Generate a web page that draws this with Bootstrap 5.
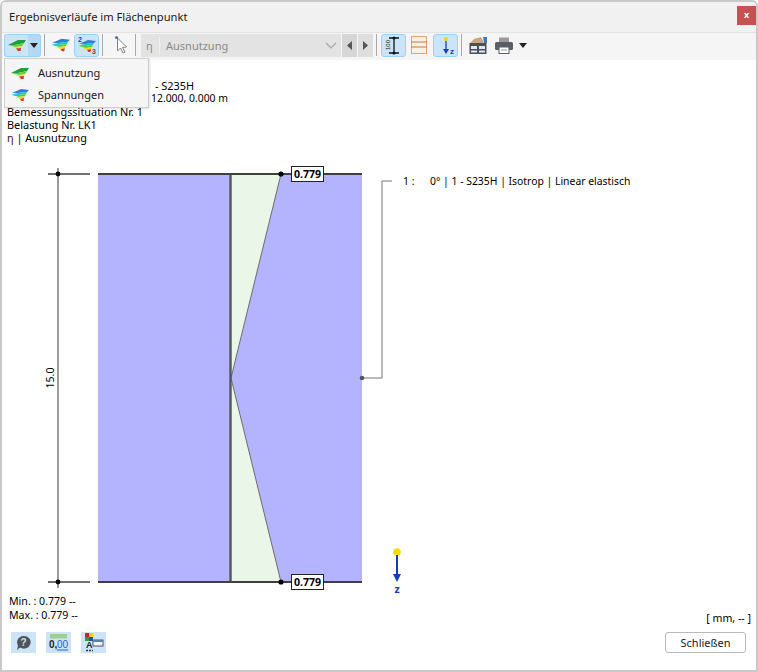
<!DOCTYPE html>
<html lang="de">
<head>
<meta charset="UTF-8">
<title>Ergebnisverläufe im Flächenpunkt</title>
<link rel="stylesheet" href="https://cdn.jsdelivr.net/npm/bootstrap@5.3.2/dist/css/bootstrap.min.css">
<style>
html, body { margin: 0; height: 100%; background: #fff; }
body { font-family: "Noto Sans", "Liberation Sans", sans-serif; font-size: 10.6px; color: #000; line-height: 13px; }
.dialog { width: 758px; height: 672px; border: 2px solid #c9c9c9; border-radius: 6px 6px 0 0; overflow: hidden; background: #fff; }
.titlebar { height: 31px; background: #f1f1f1; padding: 0 0 0 7px; font-size: 11.15px; color: #1a1a1a; border-bottom: 1px solid #e3e3e3; }
.btn-close-red { width: 19px; height: 19px; margin-left: auto; background: #c75050; color: #fff; font-weight: 700; font-size: 9px; line-height: 18px; text-align: center; margin-top: -2px; }
.toolbar { height: 27px; background: #f5f5f5; padding: 0 0 2px 2px; }
.tb { width: 25px; height: 23px; border: 1px solid transparent; border-radius: 3px; }
.tb.on { background: #cce4f7; border-color: #99d1ff; }
.tb.left { width: 24px; border-radius: 3px 0 0 3px; border-right: 0; }
.tb.right { width: 13px; background: #b5d9f5; border-radius: 0 3px 3px 0; border-left: 0; }
.sep { width: 1px; height: 22px; background: #a8a8a8; }
.ms-tb3 { margin-left: 3px; }
.ms-tb5 { margin-left: 5px; }
.ms-tb6 { margin-left: 6px; }
.ms-tb7 { margin-left: 7px; }
.ms-tb11 { margin-left: 11px; }
.combo { width: 200px; height: 23px; background: #e3e3e3; color: #8a8a8a; font-size: 11px; padding-left: 5px; margin-left: 5px; }
.combo .eta { width: 14px; border-right: 1px solid #f0f0f0; margin-right: 6px; height: 17px; line-height: 17px; }
.nav-sq { width: 15px; height: 23px; background: #d6d6d6; margin-left: 1px; }
.nav-sq.light { background: #dedede; }
.canvas { height: 568px; }
.canvas > svg { position: absolute; top: 0; left: 0; }
.canvas text { font-family: "Noto Sans", "Liberation Sans", sans-serif; font-size: 10.6px; fill: #000; }
.canvas text.legend { font-size: 10.4px; }
.canvas text.fw-bold { font-weight: 700; }
.canvas text.axis-z { font-weight: 700; fill: #0f3fc0; }
.info { padding: 19px 0 0 5px; white-space: nowrap; position: relative; font-size: 10.9px; }
.info .past-s { padding-left: 148px; }
.info .past-p { padding-left: 144px; font-size: 10.4px; }
.eta-label { color: #4a1030; }
.menu { position: absolute; top: -2px; left: 2px; width: 145px; height: 50px; background: #f5f5f5; border: 1px solid #cfcfcf; border-radius: 0; padding: 3px 0; min-width: 0; box-shadow: 1px 1px 2px rgba(0,0,0,.12); }
.menu .dropdown-item { padding: 0 0 0 6px; height: 22px; gap: 9px; font-size: 11px; color: #1a1a1a; }
.bottom { position: absolute; left: 7px; right: 5px; top: 534px; line-height: 14px; }
.unit { margin-bottom: -3px; }
.foot { height: 43px; padding: 5px 10px 0 9px; }
.ficon { width: 25px; height: 21px; background: #cce4f7; margin-right: 10px; }
.btn-schl { width: 81px; height: 21px; padding: 0; font-size: 11px; line-height: 19px; background: #fff; border: 1px solid #b9b9b9; border-radius: 3px; color: #1a1a1a; }
</style>
</head>
<body>
<svg width="0" height="0" class="d-block">
  <defs>
    <symbol id="surf" viewBox="0 0 18 12">
      <polygon points="0,6 10,1 18,1 16,4 7,6" fill="#1f9e3c"/>
      <polygon points="0,6 7,6 16,4 14,7 8,8" fill="#5fd038"/>
      <polygon points="3,7.5 8,8 14,7 13,9 8,9.5" fill="#f2e51e"/>
      <polygon points="8,9.5 13,9 12.5,12 10,12" fill="#e03020"/>
    </symbol>
    <symbol id="surf2" viewBox="0 0 18 12">
      <polygon points="1,4 10,0 18,1 16,3 7,4" fill="#2a7fd8"/>
      <polygon points="0,6 7,4 16,3 15,5 7,6" fill="#23c4c8"/>
      <polygon points="1,6 7,6 15,5 14,7 8,8" fill="#4fd040"/>
      <polygon points="5,8 8,8 14,7 13,9 9,10" fill="#f2d81e"/>
      <polygon points="9,10 13,9 12.5,12 10.5,12" fill="#e03020"/>
    </symbol>
  </defs>
</svg>
<div class="dialog d-flex flex-column">
  <div class="titlebar d-flex align-items-center">
    <span>Ergebnisverläufe im Flächenpunkt</span>
    <div class="btn-close-red">x</div>
  </div>
  <div class="toolbar d-flex align-items-center">
    <div class="tb on left d-flex align-items-center justify-content-center"><svg width="18" height="12"><use href="#surf"/></svg></div>
    <div class="tb on right d-flex align-items-center justify-content-center"><svg width="8" height="5"><polygon points="0,0 8,0 4,5" fill="#222"/></svg></div>
    <div class="sep ms-tb3"></div>
    <div class="d-flex ms-tb6"><svg width="19" height="14"><use href="#surf2"/></svg></div>
    <div class="tb on d-flex align-items-center justify-content-center ms-1">
      <svg width="21" height="20" viewBox="0 0 21 20"><use href="#surf2" x="2" y="5" width="18" height="12"/><text x="2" y="7" font-size="7" font-weight="700" fill="#1c3fb0" font-family="Liberation Sans">2</text><text x="16" y="19" font-size="7" font-weight="700" fill="#c02030" font-family="Liberation Sans">3</text></svg>
    </div>
    <div class="sep ms-tb3"></div>
    <div class="d-flex ms-tb11"><svg width="14" height="20" viewBox="0 0 14 20"><path d="M3.5 3 L3.5 16 L6.5 13 L9 18 L11 17 L8.5 12.5 L12.5 12 Z" fill="#fff" stroke="#808080"/><circle cx="2.5" cy="2.5" r="1.6" fill="#5a7a9a"/></svg></div>
    <div class="sep ms-tb7"></div>
    <div class="combo d-flex align-items-center">
      <span class="eta">η</span><span>Ausnutzung</span>
      <svg class="ms-auto me-1" width="12" height="7" viewBox="0 0 12 7"><path d="M1 1 L6 6 L11 1" fill="none" stroke="#a5a5a5" stroke-width="1.2"/></svg>
    </div>
    <div class="nav-sq d-flex align-items-center justify-content-center"><svg width="5" height="9"><polygon points="5,0 5,9 0,4.5" fill="#555"/></svg></div>
    <div class="nav-sq light d-flex align-items-center justify-content-center"><svg width="5" height="9"><polygon points="0,0 0,9 5,4.5" fill="#555"/></svg></div>
    <div class="sep ms-tb3"></div>
    <div class="tb on d-flex align-items-center justify-content-center ms-1">
      <svg width="21" height="21" viewBox="0 0 21 21"><path d="M6 3 H16 M11 3 V18 M6 18 H16" stroke="#111" stroke-width="1.3" fill="none"/><circle cx="11" cy="3" r="1.6" fill="#111"/><circle cx="11" cy="18" r="1.6" fill="#111"/><text transform="translate(7 15) rotate(-90)" font-size="6" font-family="Liberation Sans" fill="#222">100</text></svg>
    </div>
    <div class="d-flex ms-tb5"><svg width="16" height="18" viewBox="0 0 16 18"><rect x=".5" y=".5" width="15" height="17" fill="#fbf0e6" stroke="#e9a468"/><path d="M0 6 H16 M0 11 H16" stroke="#c87a3a" stroke-width="1.2"/></svg></div>
    <div class="tb on d-flex align-items-center justify-content-center ms-tb6">
      <svg width="21" height="21" viewBox="0 0 21 21"><circle cx="11" cy="4" r="2" fill="#f5d60a"/><path d="M11 6 V15" stroke="#1144bb" stroke-width="1.3"/><polygon points="8,14 14,14 11,19" fill="#1144bb"/><text x="15" y="19" font-size="8" font-weight="700" fill="#1144bb" font-family="Liberation Sans">z</text></svg>
    </div>
    <div class="sep ms-tb3"></div>
    <div class="d-flex ms-tb7"><svg width="18" height="19" viewBox="0 0 18 19"><rect x="0.5" y="7" width="17" height="11" fill="#4a4f5c"/><rect x="2" y="10" width="6" height="3" fill="#dfe6ef"/><rect x="10" y="10" width="6" height="3" fill="#dfe6ef"/><rect x="2" y="14.5" width="6" height="2" fill="#dfe6ef"/><rect x="10" y="14.5" width="6" height="2" fill="#dfe6ef"/><path d="M1 7 L5 3 L12 1 L15 7 Z" fill="#c9a77e"/><path d="M14 1 L18 1 V7 H15 Z" fill="#3a78c0"/></svg></div>
    <div class="d-flex ms-2"><svg width="18" height="17" viewBox="0 0 18 17"><rect x="4" y="0.5" width="10" height="5" fill="#9a9a9a"/><rect x="0" y="5" width="18" height="8" rx="1.5" fill="#5a5f66"/><rect x="4" y="10" width="10" height="6.5" fill="#fff" stroke="#5a5f66"/><path d="M6 13 H12" stroke="#999"/></svg></div>
    <svg class="ms-tb6" width="8" height="5"><polygon points="0,0 8,0 4,5" fill="#222"/></svg>
  </div>
  <div class="canvas position-relative">
    <svg width="754" height="568" viewBox="2 60 754 568">
      <polygon points="98,174 231,174 231,582 98,582" fill="#b4b4fe"/>
      <polygon points="281,174 362,174 362,582 281,582 231,378" fill="#b4b4fe"/>
      <polygon points="231,174 281,174 231,378 281,582 231,582" fill="#e9f6e8"/>
      <path d="M281 174 L231 378 L281 582" fill="none" stroke="#6a6a6a" stroke-width="1"/>
      <path d="M230.5 174 V582" stroke="#555" stroke-width="2.4"/>
      <path d="M98 174 H362 M98 582 H362" stroke="#3f3f3f" stroke-width="2"/>
      <path d="M48 174 H90 M48 582 H90" stroke="#444" stroke-width="1.5"/>
      <path d="M58 168 V588" stroke="#666" stroke-width="1.3"/>
      <circle cx="58" cy="174" r="2.4" fill="#000"/>
      <circle cx="58" cy="582" r="2.4" fill="#000"/>
      <text transform="translate(54 378) rotate(-90)" text-anchor="middle">15.0</text>
      <circle cx="281" cy="174" r="2.6" fill="#000"/>
      <circle cx="281" cy="582" r="2.6" fill="#000"/>
      <rect x="291.5" y="166.5" width="32" height="15" fill="#fff" stroke="#222"/>
      <rect x="291.5" y="574.5" width="32" height="15" fill="#fff" stroke="#222"/>
      <text x="307.5" y="178" text-anchor="middle" class="fw-bold">0.779</text>
      <text x="307.5" y="586" text-anchor="middle" class="fw-bold">0.779</text>
      <path d="M362 378 H382 V181 H392" fill="none" stroke="#777"/>
      <circle cx="362" cy="378" r="2.3" fill="#555"/>
      <text class="legend" x="403" y="185">1 :</text>
      <text class="legend" x="430" y="185">0° | 1 - S235H | Isotrop | Linear elastisch</text>
      <circle cx="397" cy="552" r="3.8" fill="#fbd90a"/>
      <path d="M397 555 V576" stroke="#0f3fc0" stroke-width="2"/>
      <polygon points="393,574 401,574 397,582" fill="#0f3fc0"/>
      <text x="397" y="593" text-anchor="middle" class="axis-z">z</text>
    </svg>
    <div class="info">
      <div class="past-s">- S235H</div>
      <div class="past-p">12.000, 0.000 m</div>
      <div>Bemessungssituation Nr. 1</div>
      <div>Belastung Nr. LK1</div>
      <div><span class="eta-label">η</span> | Ausnutzung</div>
    </div>
    <div class="dropdown-menu show menu">
      <div class="dropdown-item d-flex align-items-center"><svg width="18" height="12"><use href="#surf"/></svg>Ausnutzung</div>
      <div class="dropdown-item d-flex align-items-center"><svg width="18" height="12"><use href="#surf2"/></svg>Spannungen</div>
    </div>
    <div class="bottom d-flex justify-content-between align-items-end">
      <div><div>Min. : 0.779 --</div><div>Max. : 0.779 --</div></div>
      <div class="unit">[ mm, -- ]</div>
    </div>
  </div>
  <div class="foot d-flex align-items-start">
    <div class="ficon d-flex align-items-center justify-content-center"><svg width="17" height="16" viewBox="0 0 17 16"><path d="M8.5 1 A6.8 6.3 0 1 1 5 12.5 L2 15 L3 10.5 A6.8 6.3 0 0 1 8.5 1 Z" fill="#4f5459"/><text x="8.5" y="11" text-anchor="middle" font-size="10" font-weight="700" fill="#cce4f7" font-family="Liberation Sans">?</text></svg></div>
    <div class="ficon d-flex align-items-center justify-content-center"><svg width="21" height="19" viewBox="0 0 21 19"><rect x="2" y="1" width="17" height="4.5" fill="#9ccf8a"/><text x="1" y="15" font-size="10" font-weight="700" fill="#222" font-family="Liberation Sans">0,</text><text x="9" y="15" font-size="10" fill="#2a62c8" font-family="Liberation Sans">00</text><path d="M9 17 H20" stroke="#2a62c8"/></svg></div>
    <div class="ficon d-flex align-items-center justify-content-center"><svg width="21" height="19" viewBox="0 0 21 19"><rect x="2" y="0" width="4" height="4" fill="#d02020"/><rect x="6" y="0" width="4" height="4" fill="#f0d010"/><rect x="2" y="4" width="4" height="4" fill="#20a040"/><rect x="6" y="4" width="4" height="4" fill="#2050c8"/><text x="3" y="15" font-size="9" font-weight="700" fill="#222" font-family="Liberation Sans">A</text><rect x="10" y="7" width="10" height="6" fill="#f4f4f4" stroke="#555"/><rect x="10" y="7" width="10" height="2" fill="#5a7fb0"/><path d="M3 17.5 H10" stroke="#333" stroke-width="1.5" stroke-dasharray="2 1"/></svg></div>
    <button type="button" class="btn btn-schl ms-auto">Schließen</button>
  </div>
</div>
<script src="https://cdn.jsdelivr.net/npm/bootstrap@5.3.2/dist/js/bootstrap.bundle.min.js"></script>
</body>
</html>
